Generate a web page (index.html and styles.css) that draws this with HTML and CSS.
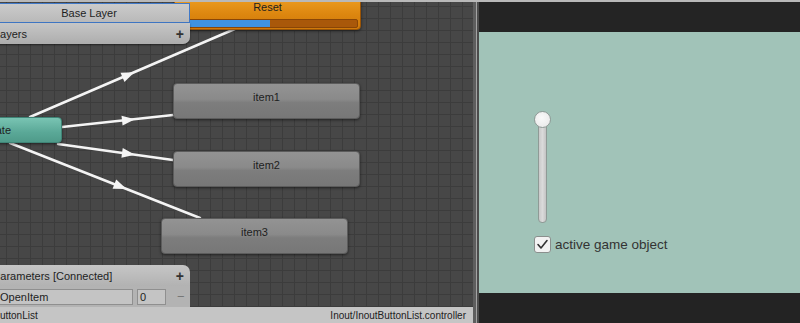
FILE: index.html
```html
<!DOCTYPE html>
<html>
<head>
<meta charset="utf-8">
<link rel="stylesheet" href="styles.css">
</head>
<body>
<div class="page">
  <div class="topstrip"></div>
  <div class="main">
    <div class="animator">
      <div class="canvas">
        <svg class="links" width="473" height="305" viewBox="0 0 473 305">
          <g stroke="#f4f4f4" stroke-width="2.5" fill="none" stroke-linecap="round">
            <line x1="30" y1="115" x2="237" y2="26"/>
            <line x1="62" y1="125" x2="173" y2="113"/>
            <line x1="58" y1="142" x2="173" y2="158"/>
            <line x1="10" y1="141" x2="200" y2="216"/>
          </g>
          <g fill="#f4f4f4">
            <polygon points="7,0 -6,-5 -6,5" transform="translate(128 73) rotate(-23.3)"/>
            <polygon points="7,0 -6,-5 -6,5" transform="translate(128 118) rotate(-6.2)"/>
            <polygon points="7,0 -6,-5 -6,5" transform="translate(128 151.7) rotate(7.9)"/>
            <polygon points="7,0 -6,-5 -6,5" transform="translate(120 184.4) rotate(21.5)"/>
          </g>
        </svg>

        <div class="node node-reset">
          <div class="node-label">Reset</div>
          <div class="progress"><div class="progress-fill"></div></div>
        </div>

        <div class="node node-entry"><div class="node-label">New State</div></div>
        <div class="node node-item item1"><div class="node-label">item1</div></div>
        <div class="node node-item item2"><div class="node-label">item2</div></div>
        <div class="node node-item item3"><div class="node-label">item3</div></div>

        <div class="crumb">Base Layer</div>
        <div class="layers">
          <span>Layers</span><span class="plus">+</span>
        </div>

        <div class="params">
          <div class="params-head"><span>Parameters [Connected]</span><span class="plus">+</span></div>
          <div class="params-row">
            <div class="field field-name">OpenItem</div>
            <div class="field field-num">0</div>
            <span class="minus">−</span>
          </div>
        </div>
      </div>
      <div class="statusbar">
        <span class="status-left">InoutButtonList</span>
        <span class="status-right">Inout/InoutButtonList.controller</span>
      </div>
    </div>
    <div class="sep"></div>
    <div class="game">
      <div class="game-top"></div>
      <div class="game-view">
        <div class="slider">
          <div class="track"></div>
          <div class="handle"></div>
        </div>
        <label class="toggle">
          <span class="checkbox">
            <svg width="13" height="13" viewBox="0 0 13 13"><path d="M2 6.5 L5 10 L11 2.5" stroke="#333" stroke-width="1.6" fill="none" stroke-linecap="round" stroke-linejoin="round"/></svg>
          </span>
          <span class="toggle-text">active game object</span>
        </label>
      </div>
      <div class="game-bottom"></div>
    </div>
  </div>
</div>
</body>
</html>
```

FILE: styles.css
```css
html, body {
  margin: 0;
  padding: 0;
}
body {
  width: 800px;
  height: 323px;
  overflow: hidden;
  font-family: "Liberation Sans", Arial, sans-serif;
  background: #242424;
}
.page {
  display: flex;
  flex-direction: column;
  height: 323px;
}
.topstrip {
  height: 2px;
  background: #b9b9b9;
}
.main {
  flex: 1;
  display: flex;
  min-height: 0;
}
.animator {
  width: 473px;
  display: flex;
  flex-direction: column;
}
.canvas {
  flex: 1;
  position: relative;
  overflow: hidden;
  background-color: #474747;
  background-image:
    linear-gradient(#3c3c3c 1px, transparent 1px),
    linear-gradient(90deg, #3c3c3c 1px, transparent 1px);
  background-size: 12px 12px;
  background-position: 6px 4px;
}
.links {
  position: absolute;
  left: 0;
  top: 0;
}
.node {
  position: absolute;
  box-sizing: border-box;
  border-radius: 4px;
  font-size: 11px;
  color: #1e1e1e;
  box-shadow: 0 1px 3px rgba(0, 0, 0, 0.55);
}
.node-label {
  text-align: center;
  line-height: 13px;
}
.node-item {
  width: 187px;
  height: 36px;
  border: 1px solid #5c5c5c;
  background: linear-gradient(#939393 0%, #8a8a8a 45%, #7d7d7d 55%, #777777 100%);
  padding-top: 7px;
}
.item1 { left: 173px; top: 81px; }
.item2 { left: 173px; top: 149px; }
.item3 { left: 161px; top: 216px; }

.node-reset {
  left: 174px;
  top: -10px;
  width: 187px;
  height: 38px;
  border: 1px solid #9a5406;
  background: linear-gradient(#f2a428, #dc860f 60%, #cf790a);
  padding-top: 8px;
}
.progress {
  margin: 5px 2px 0 2px;
  height: 7px;
  border-radius: 2px;
  background: #a9580a;
  border: 1px solid #8a4606;
}
.progress-fill {
  width: 92px;
  height: 100%;
  background: #3f92e0;
}
.node-entry {
  left: -125px;
  top: 115px;
  width: 187px;
  height: 26px;
  border: 1px solid #3f8577;
  background: linear-gradient(#79c4b3, #5aa897 60%, #4f9b8a);
  padding-top: 6px;
}
.node-entry .node-label {
  text-align: right;
  padding-right: 50px;
}

.crumb {
  position: absolute;
  left: -12px;
  top: 1px;
  width: 202px;
  height: 20px;
  box-sizing: border-box;
  border: 1px solid #4079c8;
  background: linear-gradient(#cbcbcb, #b9b9b9);
  font-size: 11px;
  color: #1e1e1e;
  text-align: center;
  line-height: 18px;
}
.layers {
  position: absolute;
  left: -10px;
  top: 21px;
  width: 200px;
  height: 21px;
  box-sizing: border-box;
  padding: 0 6px 0 4px;
  background: linear-gradient(#c6c6c6, #adadad);
  border-bottom-right-radius: 7px;
  box-shadow: 0 1px 2px rgba(0, 0, 0, 0.5);
  display: flex;
  justify-content: space-between;
  align-items: center;
  font-size: 11px;
  color: #1e1e1e;
}
.plus {
  font-size: 14px;
  font-weight: bold;
  color: #333;
}
.params {
  position: absolute;
  left: -10px;
  top: 263px;
  width: 200px;
  height: 42px;
  display: flex;
  flex-direction: column;
}
.params-head {
  height: 21px;
  box-sizing: border-box;
  padding: 0 6px 0 3px;
  background: linear-gradient(#c6c6c6, #b2b2b2);
  border-top-right-radius: 7px;
  display: flex;
  justify-content: space-between;
  align-items: center;
  font-size: 11px;
  color: #1e1e1e;
}
.params-row {
  flex: 1;
  background: #b3b3b3;
  display: flex;
  align-items: center;
}
.field {
  box-sizing: border-box;
  height: 16px;
  border: 1px solid #8f8f8f;
  background: #c4c4c4;
  font-size: 11px;
  line-height: 14px;
  color: #1e1e1e;
  padding-left: 2px;
}
.field-name {
  width: 143px;
  padding-left: 9px;
}
.field-num {
  width: 29px;
  margin-left: 4px;
}
.minus {
  margin-left: 11px;
  font-size: 13px;
  color: #777;
}
.statusbar {
  height: 16px;
  background: #c5c5c5;
  display: flex;
  justify-content: space-between;
  align-items: center;
  padding-right: 7px;
  font-size: 10px;
  color: #222;
  overflow: hidden;
}
.status-left {
  margin-left: -29px;
}
.sep {
  width: 6px;
  background: linear-gradient(90deg, #5e5e5e 0, #5e5e5e 3px, #a3a3a3 3px, #a3a3a3 4px, #4c4c4c 4px);
}
.game {
  flex: 1;
  display: flex;
  flex-direction: column;
}
.game-top {
  height: 30px;
  background: #242424;
}
.game-view {
  height: 261px;
  background: #a1c3b8;
  box-sizing: border-box;
  padding: 79px 0 0 55px;
  display: flex;
  flex-direction: column;
  align-items: flex-start;
}
.game-bottom {
  flex: 1;
  background: #232323;
}
.slider {
  position: relative;
  width: 17px;
  height: 112px;
}
.track {
  position: absolute;
  left: 4px;
  top: 8px;
  width: 9px;
  bottom: 0;
  box-sizing: border-box;
  border: 1px solid #8f9a96;
  border-radius: 4px;
  background: linear-gradient(90deg, #c9c9c9, #dadada 50%, #c4c4c4);
}
.handle {
  position: absolute;
  left: 0;
  top: 0;
  width: 17px;
  height: 17px;
  box-sizing: border-box;
  border-radius: 50%;
  border: 1px solid #8e9a96;
  background: radial-gradient(circle at 45% 40%, #fafafa, #e6e6e6);
}
.toggle {
  margin-top: 13px;
  display: flex;
  align-items: center;
  gap: 4px;
}
.checkbox {
  width: 17px;
  height: 17px;
  box-sizing: border-box;
  border: 1px solid #8a8f8d;
  border-radius: 3px;
  background: #f2f2f2;
  display: flex;
  align-items: center;
  justify-content: center;
}
.toggle-text {
  font-size: 13.5px;
  color: #333;
}
```
